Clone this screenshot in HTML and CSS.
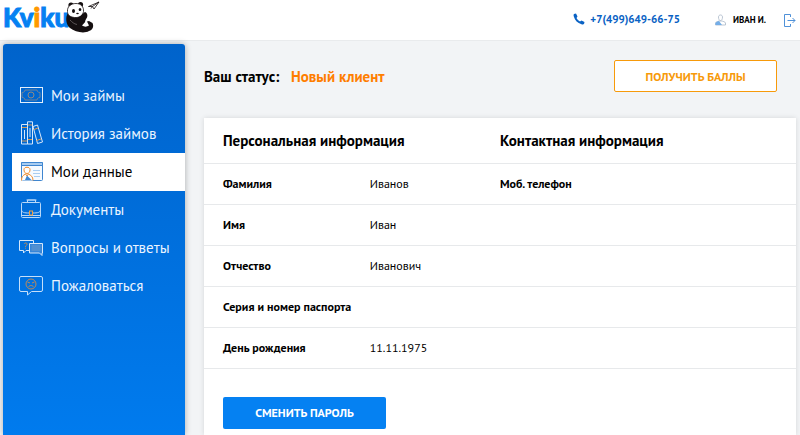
FILE: index.html
```html
<!DOCTYPE html>
<html lang="ru">
<head>
    <meta charset="utf-8">
    <meta name="viewport" content="width=device-width, initial-scale=1">
    <title>Kviku - Мои данные</title>
    <link rel="stylesheet" href="styles.css">
</head>
<body>

    <header class="header">
        <a class="logo" href="#" aria-label="Kviku">
            <span class="logo-text">Kv<span class="logo-i">i</span>ku</span>
            <svg class="logo-panda" width="36" height="34" viewBox="0 0 36 34">
                <path d="M3 13 C0 17 1 25 5 28 C10 32 19 34 24 31 C28 30 29 26 27.500 23 L24 21 L20 22 L22 14 Z" fill="#150f10"/>
                <path d="M17 25.500 L21.500 20.500 L24 25.500 C22 27 19 27 17 25.500 Z" fill="#fff"/>
                <path d="M5 20 C7 22 9 24 12 24.500" fill="none" stroke="#6d6667" stroke-width=".8"/>
                <circle cx="6" cy="5" r="2.600" fill="#150f10"/>
                <circle cx="15.500" cy="4.500" r="2.600" fill="#150f10"/>
                <path d="M2.500 11.500 C2 6.500 6 3.500 11 3.500 C16 3.500 19 7 18.500 11.500 C18 15.500 14 18 9.500 17.500 C5 17 2.500 15 2.500 11.500 Z" fill="#fff" stroke="#150f10" stroke-width=".8"/>
                <ellipse cx="8.500" cy="11" rx="1.500" ry="1.900" fill="#150f10"/>
                <ellipse cx="15" cy="9.500" rx="1.300" ry="1.600" fill="#150f10"/>
                <ellipse cx="12.500" cy="13.500" rx="1.300" ry=".8" fill="#150f10"/>
                <path d="M11 18 C15 18 17 14 20 12 C23 13 23 17 21 19 C19 22 15 23 12 22 Z" fill="#150f10"/>
                <path d="M23.500 6.500 L34 2 L29 9 L27.500 6.500 Z M27.500 6.500 L34 2 M26 8.500 L27.500 6.500" fill="#fff" stroke="#150f10" stroke-width=".8"/>
            </svg>
        </a>
        <a class="phone" href="tel:+74996496675">
            <svg width="12" height="12" viewBox="0 0 12 12">
                <path d="M1 1 L3 .5 L4.500 3.500 L3.500 5 C4.200 6.500 5.500 7.800 7 8.500 L8.500 7.500 L11.500 9 L11 11 C10.500 11.500 9.500 11.500 8.500 11.200 C4.500 10 2 7.500 .8 3.500 C.5 2.500 .5 1.500 1 1 Z" fill="#0a62c4"/>
            </svg>
            +7(499)649-66-75
        </a>
        <a class="user" href="#">
            <svg width="11" height="12" viewBox="0 0 11 12">
                <path d="M3.500 3 C3.500 .3 7.500 .3 7.500 3 C7.500 5 6.800 6.500 5.500 6.500 C4.200 6.500 3.500 5 3.500 3 Z M.5 11 V9 C1 7.500 3 7.500 4 7 H7 C8 7.500 10 7.500 10.500 9 V11 Z" fill="#fff" stroke="#a9b7c8" stroke-width=".8"/>
                <path d="M.5 11 V9 C1 7.800 3 7.500 4 7 L7 11 Z" fill="#74aee8"/>
            </svg>
            ИВАН И.
        </a>
        <a class="logout" href="#" aria-label="Выход">
            <svg width="12" height="13" viewBox="0 0 12 13" fill="none" stroke="#4f91d8">
                <path d="M6.500 3 V.5 H.5 V12.500 H6.500 V10 M3.500 6.500 H11 M8.500 4 L11 6.500 L8.500 9"/>
            </svg>
        </a>
    </header>

    <div class="page">
        <nav class="sidebar">
            <a class="menu-item" href="#">
                <svg width="24" height="24" viewBox="0 0 24 24" fill="none">
                    <rect x="1.500" y="4.500" width="22" height="15" stroke="#e3effc"/>
                    <path d="M6 7 H18 C18 8.500 19 9.500 21 9.500 V14.500 C19 14.500 18 15.500 18 17 H6 C6 15.500 5 14.500 3 14.500 V9.500 C5 9.500 6 8.500 6 7 Z" stroke="#718397"/>
                    <circle cx="12" cy="12" r="3" stroke="#8e8984"/>
                </svg>
                Мои займы
            </a>
            <a class="menu-item" href="#">
                <svg width="24" height="24" viewBox="0 0 24 24" fill="none" stroke="#d5e7fb">
                    <path d="M2.500 3.500 H8.500 V23 H2.500 Z M8.500 .8 H13.500 V23 H8.500 Z M14 5.500 L18.500 4 L23.500 21 L18.500 22.500 Z M5.500 9 V18 M11 7 V16"/>
                    <path d="M3 6.500 H8 M3 20 H8 M9 4 H13 M9 18.500 H13 M15 8.500 L19 7 M17.500 19.500 L22 18" stroke="#d99a56"/>
                </svg>
                История займов
            </a>
            <a class="menu-item active" href="#">
                <svg width="24" height="24" viewBox="0 0 24 24" fill="none">
                    <rect x="2.500" y="3.500" width="21" height="18" rx="1" fill="#f5faff" stroke="#3f86d0"/>
                    <path d="M2.500 3.500 H23.500 V6.500 H2.500 Z" fill="#a9cdf1" stroke="#3f86d0"/>
                    <path d="M14 11.500 H21 M14 14.500 H21 M15 17.500 H21" stroke="#a9cdf1"/>
                    <path d="M5 10.500 C5 7.500 11 7.500 11 10.500 C11 13 10 14.500 8 14.500 C6 14.500 5 13 5 10.500 Z M2.500 21.500 C2.500 17.500 4 16.500 6.500 15 L8 17 L9.500 15 C12 16.500 14 17.500 14 21.500" fill="#fff" stroke="#f08c2c"/>
                    <path d="M8 16.500 L12.500 21 H6 Z" fill="#3f86d0"/>
                </svg>
                Мои данные
            </a>
            <a class="menu-item" href="#">
                <svg width="24" height="24" viewBox="0 0 24 24" fill="none" stroke="#b9d8f8">
                    <path d="M8.500 5.500 V3 H16.500 V5.500 M7.500 3 H17.500"/>
                    <rect x="2.500" y="5.500" width="19" height="15" rx="1"/>
                    <path d="M2.500 13 C3 15.500 5 16 10.500 16 M21.500 13 C21 15.500 19 16 13.500 16 M2.500 18.500 H21.500"/>
                    <rect x="10.500" y="14" width="3" height="4" stroke="#eda044"/>
                </svg>
                Документы
            </a>
            <a class="menu-item" href="#">
                <svg width="24" height="24" viewBox="0 0 24 24" fill="none" stroke="#d5e7fb">
                    <path d="M10 15.500 H7 L4.500 18 V15.500 H.5 V5.500 H14.500 V8"/>
                    <path d="M10.500 8.500 H23.500 V18 H23 V20.500 L20.500 18 H10.500 Z" fill="#3686d9"/>
                    <path d="M12.500 11 H21.500 M12.500 13 H21.500 M12.500 15 H21.500" stroke="#6f9ac9"/>
                    <path d="M5.500 9 C5.500 7.500 8.500 7.500 8 9.500 C7.500 10.500 6.500 10.500 6.500 12 M6.500 12.800 V13.600" stroke="#c68b51"/>
                </svg>
                Вопросы и ответы
            </a>
            <a class="menu-item" href="#">
                <svg width="24" height="24" viewBox="0 0 24 24" fill="none">
                    <path d="M2 3.500 H22 Q23.500 3.500 23.500 5 V17 Q23.500 18.500 22 18.500 H12.500 L8.500 22 V18.500 H2 Q.5 18.500 .5 17 V5 Q.5 3.500 2 3.500 Z" stroke="#c5dffa"/>
                    <circle cx="12" cy="11" r="5" stroke="#bd8a5a"/>
                    <path d="M8.500 9 L11 10 M15.500 9 L13 10 M9.500 14 C10.500 12 13.500 12 14.500 14" stroke="#bd8a5a"/>
                </svg>
                Пожаловаться
            </a>
        </nav>

        <main class="content">
            <div class="status-bar">
                <p class="status">Ваш статус: <span class="status-value">Новый клиент</span></p>
                <button class="btn bonus-btn" type="button">Получить баллы</button>
            </div>

            <section class="card">
                <table class="info">
                    <colgroup>
                        <col class="col-label">
                        <col class="col-value">
                        <col>
                    </colgroup>
                    <thead>
                        <tr>
                            <th colspan="2">Персональная информация</th>
                            <th>Контактная информация</th>
                        </tr>
                    </thead>
                    <tbody>
                        <tr>
                            <th scope="row">Фамилия</th>
                            <td>Иванов</td>
                            <th scope="row">Моб. телефон</th>
                        </tr>
                        <tr>
                            <th scope="row">Имя</th>
                            <td>Иван</td>
                            <td></td>
                        </tr>
                        <tr>
                            <th scope="row">Отчество</th>
                            <td>Иванович</td>
                            <td></td>
                        </tr>
                        <tr>
                            <th scope="row">Серия и номер паспорта</th>
                            <td></td>
                            <td></td>
                        </tr>
                        <tr>
                            <th scope="row">День рождения</th>
                            <td>11.11.1975</td>
                            <td></td>
                        </tr>
                    </tbody>
                </table>
                <button class="btn password-btn" type="button">Сменить пароль</button>
            </section>
        </main>
    </div>

</body>
</html>
```

FILE: styles.css
```css
/* General Styles */
* {
    box-sizing: border-box;
}

body {
    font-family: "PT Sans", "Noto Sans", sans-serif;
    font-size: 12px;
    margin: 0;
    min-height: 100vh;
    display: flex;
    flex-direction: column;
    background-color: #f2f4f6;
    color: #000;
}

a {
    color: inherit;
    text-decoration: none;
}

/* Header */
.header {
    display: flex;
    align-items: center;
    height: 41px;
    padding: 0 4px 0 3px;
    background-color: #fff;
    border-bottom: 1px solid #e9ebed;
}

.logo {
    display: flex;
    align-items: flex-start;
    margin-right: auto;
    height: 40px;
}

.logo-text {
    font-family: Lato, sans-serif;
    font-size: 26px;
    line-height: 34px;
    font-weight: 900;
    color: #0581f2;
    -webkit-text-stroke: 1px #0581f2;
}

.logo-i {
    color: #f90;
    -webkit-text-stroke-color: #f90;
}

.logo-panda { margin-left: -4px; }

.phone, .user {
    display: flex;
    align-items: center;
    font-weight: bold;
}

.phone {
    gap: 5px;
    margin-right: 35px;
    padding-bottom: 3px;
    font-size: 11px;
    color: #0a62c4;
}

.user {
    gap: 7px;
    margin-right: 18px;
    padding-bottom: 1px;
    font-size: 9px;
}

.logout { display: flex; }

/* Sidebar */
.page {
    display: flex;
    flex: 1;
    gap: 19px;
    padding: 0 4px 0 3px;
}

.sidebar {
    flex: none;
    width: 182px;
    margin-top: 3px;
    padding: 33px 0 0 9px;
    background: linear-gradient(#0063cb, #007bee);
    border-radius: 3px 3px 0 0;
    box-shadow: 0 0 6px rgba(0, 0, 0, 0.3);
}

.menu-item {
    display: flex;
    align-items: center;
    gap: 8px;
    height: 38px;
    padding: 0 0 2px 7px;
    font-size: 15px;
    color: #eaf4ff;
    white-space: nowrap;
}

.menu-item.active {
    background-color: #fff;
    color: #000;
}

/* Content */
.content {
    flex: 1;
    display: flex;
    flex-direction: column;
}

.status-bar {
    display: flex;
    justify-content: space-between;
    align-items: center;
    height: 77px;
    padding: 0 19px 7px 0;
}

.status {
    margin: 0;
    font-size: 15px;
    font-weight: bold;
}

.status-value {
    margin-left: 8px;
    color: #ff7e00;
}

/* Buttons */
.btn {
    width: 163px;
    height: 32px;
    font-family: inherit;
    font-size: 12px;
    font-weight: bold;
    text-transform: uppercase;
    border-radius: 2px;
    cursor: pointer;
}

.bonus-btn {
    background-color: #fff;
    border: 1px solid #f79a0a;
    color: #f79a0a;
}

.password-btn {
    margin: 28px 0 4px 19px;
    background-color: #0581f2;
    border: none;
    color: #fff;
}

/* Card */
.card {
    flex: 1;
    background-color: #fff;
    box-shadow: 0 0 5px rgba(0, 0, 0, 0.12);
}

.info {
    width: 100%;
    table-layout: fixed;
    border-collapse: collapse;
}

.info th, .info td {
    height: 41px;
    padding: 0;
    border-bottom: 1px solid #e7e9eb;
    text-align: left;
    white-space: nowrap;
}

.info th:first-child { padding-left: 19px; }

.info thead th {
    height: 45px;
    font-size: 15px;
}

.col-label { width: 28%; }
.col-value { width: 22%; }
```
